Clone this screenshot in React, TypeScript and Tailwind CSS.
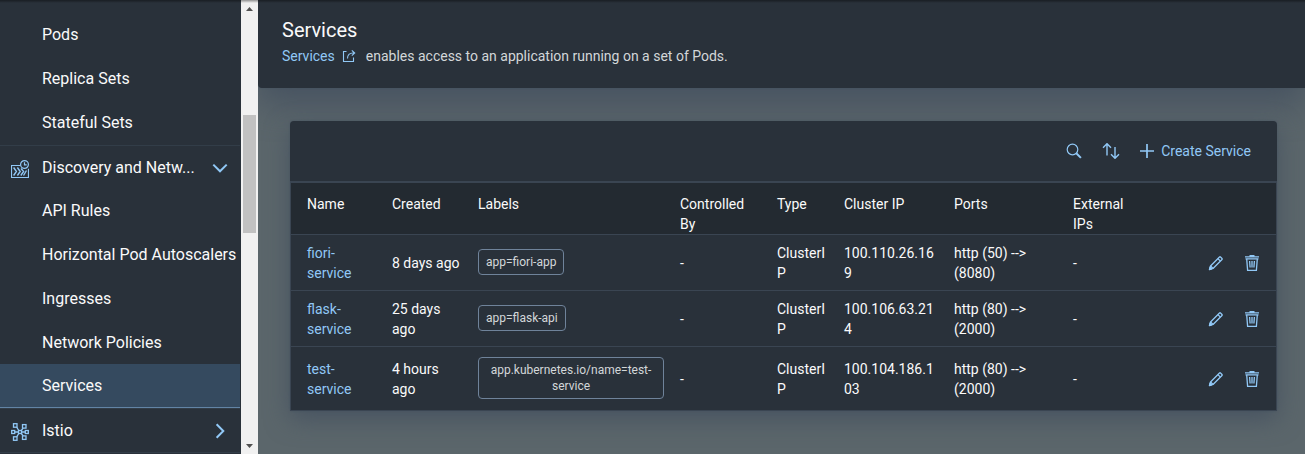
import React from "react";

type IconProps = { className?: string };

const PipelineIcon = ({ className }: IconProps) => (
  <svg viewBox="0 0 18 18" className={className} fill="none" stroke="currentColor" strokeWidth="1.2" aria-hidden="true">
    <path d="M9.5 5.5h-9v12h17V8.800" />
    <circle cx="13.500" cy="4.500" r="3.900" />
    <path d="M13.500 2.200v2.700h2.200" />
    <path d="M2.600 7.500 5.400 11.500l-2.800 4M6.400 7.500l2.800 4-2.800 4M10 8.500l2.600 3-2.800 4M15.500 10.500l-3 5" strokeWidth="1.400" />
  </svg>
);

const MeshIcon = ({ className }: IconProps) => (
  <svg viewBox="0 0 18 18" className={className} fill="none" stroke="currentColor" strokeWidth="1.3" aria-hidden="true">
    <rect x="7.500" y="7.500" width="3" height="3" />
    <rect x="2.500" y=".7" width="3.500" height="3.500" />
    <rect x="11.500" y="1.600" width="3.500" height="3.500" />
    <rect x=".7" y="7.500" width="3" height="3" />
    <rect x="14.300" y="7.500" width="3" height="3" />
    <rect x="2.500" y="13.800" width="3.500" height="3.500" />
    <rect x="11.500" y="12.900" width="3.500" height="3.500" />
    <path d="M5.600 4.200 7.800 7.500M12.200 5.100l-1.900 2.400M3.700 9h3.800M10.500 9h3.800M7.800 10.500l-2.200 3.300M10.300 10.500l1.900 2.400" />
  </svg>
);

const ChevronIcon = ({ className }: IconProps) => (
  <svg viewBox="0 0 16 16" className={className} fill="none" stroke="currentColor" strokeWidth="2" aria-hidden="true">
    <path d="m1.300 4.600 6.700 6.700 6.700-6.700" />
  </svg>
);

const ExternalIcon = ({ className }: IconProps) => (
  <svg viewBox="0 0 14 12" className={className} fill="none" stroke="currentColor" strokeWidth="1.100" aria-hidden="true">
    <path d="M4.500 1.500h-3v10h10v-4" />
    <path d="M5.500 8.500c0-3.500 2-5.500 5.500-5.500h1.500M9.800.4l2.900 2.600-2.900 2.600" />
  </svg>
);

const SearchIcon = ({ className }: IconProps) => (
  <svg viewBox="0 0 16 16" className={className} fill="none" stroke="currentColor" aria-hidden="true">
    <circle cx="6.500" cy="6.500" r="5.300" strokeWidth="1.200" />
    <path d="m10.300 10.300 4.600 4.600" strokeWidth="2" />
  </svg>
);

const SortIcon = ({ className }: IconProps) => (
  <svg viewBox="0 0 18 16" className={className} fill="none" stroke="currentColor" strokeWidth="1.400" aria-hidden="true">
    <path d="M5 12.500V.9M1 4.700l4-4 4 4" />
    <path d="M13 4v11M9 11.300l4 4 4-4" />
  </svg>
);

const PlusIcon = ({ className }: IconProps) => (
  <svg viewBox="0 0 14 14" className={className} fill="none" stroke="currentColor" strokeWidth="1.700" aria-hidden="true">
    <path d="M7 0v14M0 7h14" />
  </svg>
);

const PencilIcon = ({ className }: IconProps) => (
  <svg viewBox="0 0 16 16" className={className} fill="none" stroke="currentColor" strokeWidth="1.300" strokeLinejoin="round" aria-hidden="true">
    <path d="m1.500 14.500 1-3.500 9-9q.5-.5 1 0L14 3.500q.5.500 0 1l-9 9z" />
    <path d="m9.900 3.600 2.500 2.500M2.600 11l2.400 2.500" />
    <path d="m1.500 14.500.6-2.300 1.700 1.700z" fill="currentColor" />
  </svg>
);

const TrashIcon = ({ className }: IconProps) => (
  <svg viewBox="0 0 16 16" className={className} fill="none" stroke="currentColor" strokeWidth="1.300" aria-hidden="true">
    <path d="M1 1.800h14M5.500.500h5M1.500 3.900h13M2.700 3.900l.9 11.500h8.800l.9-11.500" />
    <path d="m5.600 6 .5 6.500M8 6v6.500M10.400 6l-.5 6.500" />
  </svg>
);

function NavItem({ label, active }: { label: string; active?: boolean }) {
  return (
    <li>
      <a
        href="#"
        aria-current={active ? "page" : undefined}
        className={
          active
            ? "flex h-11 items-center border-b border-[#6284a5] bg-[#354a5f] pl-[42px] whitespace-nowrap"
            : "flex h-11 items-center pl-[42px] whitespace-nowrap"
        }
      >
        {label}
      </a>
    </li>
  );
}

function NavGroup({ label, icon, open }: { label: string; icon: React.ReactNode; open?: boolean }) {
  return (
    <button
      type="button"
      aria-expanded={!!open}
      className="flex h-11 w-full items-center gap-3 border-t border-[#323d48] pr-3 pl-[11px] text-left"
    >
      <span className="mt-[2px] flex w-[19px] shrink-0 text-[#91c8f6]">{icon}</span>
      <span className="flex-1 whitespace-nowrap">{label}</span>
      <ChevronIcon className={open ? "size-4 text-[#91c8f6]" : "size-4 -rotate-90 text-[#91c8f6]"} />
    </button>
  );
}

const columns = [
  { title: "Name", width: "w-[93px]" },
  { title: "Created", width: "w-[86px]" },
  { title: "Labels", width: "w-[202px]" },
  { title: "Controlled By", width: "w-[97px]" },
  { title: "Type", width: "w-[67px]" },
  { title: "Cluster IP", width: "w-[110px]" },
  { title: "Ports", width: "w-[119px]" },
  { title: "External IPs", width: "w-[76px]" },
];

const services = [
  { name: "fiori-service", created: "8 days ago", label: "app=fiori-app", ip: "100.110.26.169", ports: "http (50) --> (8080)" },
  { name: "flask-service", created: "25 days ago", label: "app=flask-api", ip: "100.106.63.214", ports: "http (80) --> (2000)" },
  { name: "test-service", created: "4 hours ago", label: "app.kubernetes.io/name=test-service", ip: "100.104.186.103", ports: "http (80) --> (2000)" },
];

export default function App() {
  return (
    <div className="relative flex h-screen overflow-hidden bg-[#5b666b] font-['Roboto',sans-serif] text-sm text-[#fafafa]">
      <div className="absolute inset-x-0 top-0 z-10 h-[3px] bg-linear-to-b from-black/40 to-transparent" aria-hidden="true" />
      <nav className="w-60 shrink-0 overflow-hidden bg-[#29313a] pt-[13px] text-base" aria-label="Cluster">
        <ul>
          <NavItem label="Pods" />
          <NavItem label="Replica Sets" />
          <NavItem label="Stateful Sets" />
        </ul>
        <NavGroup label="Discovery and Netw..." icon={<PipelineIcon className="size-[18px]" />} open />
        <ul>
          <NavItem label="API Rules" />
          <NavItem label="Horizontal Pod Autoscalers" />
          <NavItem label="Ingresses" />
          <NavItem label="Network Policies" />
        </ul>
        <ul className="-mt-px">
          <NavItem label="Services" active />
        </ul>
        <NavGroup label="Istio" icon={<MeshIcon className="size-[18px]" />} />
        <div className="border-t border-[#323d48]" />
      </nav>

      <div className="flex w-[18px] shrink-0 flex-col items-center border-l border-[#29313a] bg-[#f1f1f1] text-[#505050]" aria-hidden="true">
        <svg viewBox="0 0 17 17" className="size-[17px]" fill="currentColor">
          <path d="M5 11h7L8.500 7z" />
        </svg>
        <div className="mt-[98px] h-[118px] w-[13px] bg-[#c1c1c1]" />
        <svg viewBox="0 0 17 17" className="mt-auto size-[17px]" fill="currentColor">
          <path d="M5 7h7l-3.500 4z" />
        </svg>
      </div>

      <main className="min-w-0 flex-1 overflow-hidden">
        <header className="rounded-bl bg-[#29313a] px-6 pt-[18px] pb-[22px] shadow-[0_0_2px_0_#475361,0_16px_32px_0_#475361]">
          <h1 className="text-xl leading-6">Services</h1>
          <p className="mt-1 leading-5 text-[#d3d7d9]">
            <a href="#" className="mr-[10px] inline-flex items-center gap-[7px] text-[#91c8f6]">
              Services
              <ExternalIcon className="h-3 w-[14px]" />
            </a>
            enables access to an application running on a set of Pods.
          </p>
        </header>

        <section className="mx-7 mt-[33px] ml-8 rounded-t bg-[#29313a] shadow-[0_0_2px_0_#475361,0_8px_24px_0_#475361]">
          <div className="flex h-[60px] items-center justify-end gap-5 pr-[26px] pb-px text-[#91c8f6]">
            <button type="button" aria-label="Search">
              <SearchIcon className="size-4" />
            </button>
            <button type="button" aria-label="Sort">
              <SortIcon className="h-4 w-[18px]" />
            </button>
            <button type="button" className="flex items-center gap-[7px]">
              <PlusIcon className="size-[14px]" />
              Create Service
            </button>
          </div>
          <div className="border-x border-[#3a4552]">
            <table className="w-full table-fixed border-t-2 border-[#3a4552] text-left leading-5">
              <thead className="bg-[#232a31]">
                <tr className="h-[52px] border-b border-[#3a4552]">
                  {columns.map((c) => (
                    <th key={c.title} scope="col" className={`${c.width} px-2 pt-[11px] align-top font-normal first:pl-4`}>
                      {c.title}
                    </th>
                  ))}
                  <th className="w-[135px]" aria-label="Actions" />
                </tr>
              </thead>
              <tbody>
                {services.map((s) => (
                  <tr key={s.name} className="h-14 border-b border-[#3a4552] last:h-16">
                    <td className="py-[7px] pr-2 pl-4">
                      <a href="#" className="text-[#91c8f6]">{s.name}</a>
                    </td>
                    <td className="px-2">{s.created}</td>
                    <td className="px-2">
                      <span className="mb-[2px] inline-block rounded border border-[#6f839a] px-[7px] py-1 text-center align-middle text-xs leading-4 text-[#d3d7d9]">
                        {s.label}
                      </span>
                    </td>
                    <td className="px-2">-</td>
                    <td className="px-2 break-words">ClusterIP</td>
                    <td className="px-2 break-words">{s.ip}</td>
                    <td className="px-2">{s.ports}</td>
                    <td className="px-2">-</td>
                    <td className="pr-4">
                      <div className="flex justify-end gap-5 text-[#91c8f6]">
                        <button type="button" aria-label={`Edit ${s.name}`}>
                          <PencilIcon className="size-4" />
                        </button>
                        <button type="button" aria-label={`Delete ${s.name}`}>
                          <TrashIcon className="size-4" />
                        </button>
                      </div>
                    </td>
                  </tr>
                ))}
              </tbody>
            </table>
          </div>
        </section>
      </main>
    </div>
  );
}
